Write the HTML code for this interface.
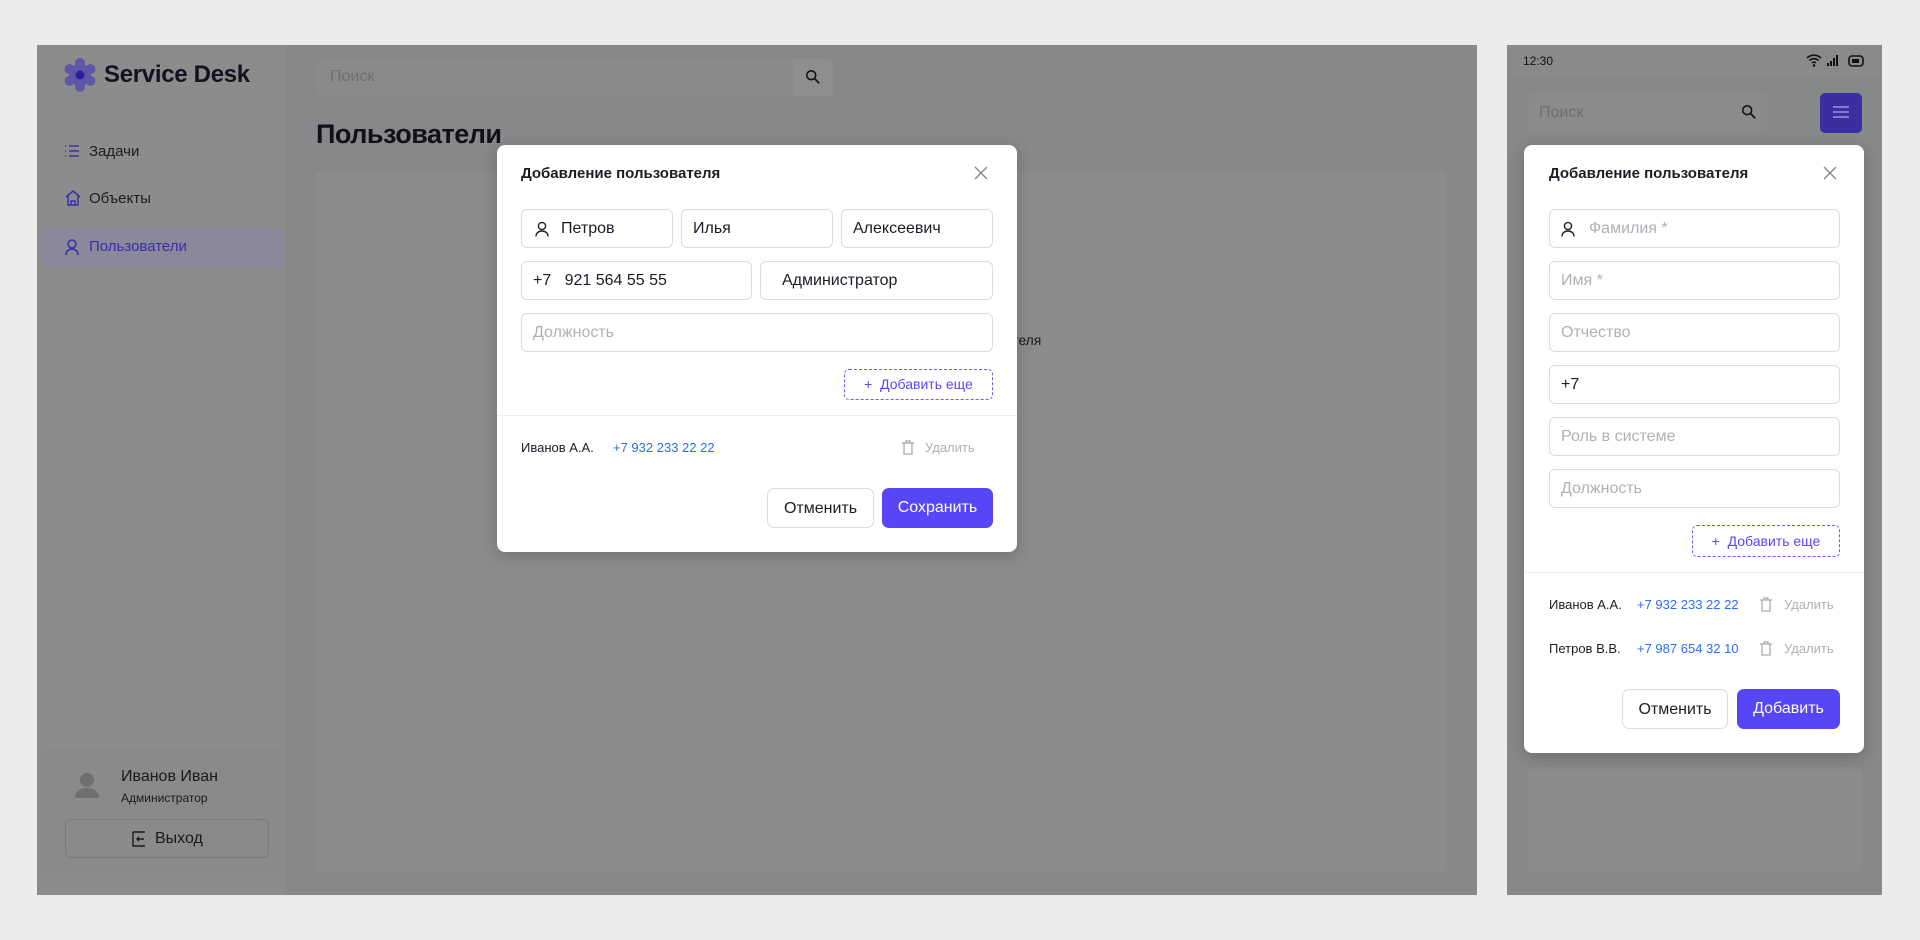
<!DOCTYPE html>
<html><head><meta charset="utf-8"><style>
*{box-sizing:border-box;margin:0;padding:0}
body{width:1920px;height:940px;background:#ececec;font-family:"Liberation Sans",sans-serif;position:relative;overflow:hidden;color:#1c1c28}
.a{position:absolute}
.inp{position:absolute;height:39px;border:1px solid #dcdce0;border-radius:6px;background:#fff;font-size:16px;line-height:38px;padding-left:11px;color:#1c1c28}
.ph{color:#b0b0b8}
.modal{position:absolute;background:#fff;border-radius:8px;box-shadow:0 4px 16px rgba(0,0,0,.2)}
.btn{position:absolute;height:40px;border-radius:7px;font-size:16px;line-height:39px;text-align:center}
.add{position:absolute;border:1px dashed #6a5cf0;border-radius:5px;color:#5a48ef;font-size:14px;text-align:center}
</style></head><body>
<!-- desktop -->
<div class="a" style="left:37px;top:45px;width:1440px;height:850px;background:#87888a"></div>
<div class="a" style="left:37px;top:45px;width:248px;height:850px;background:#8c8c8d"></div>
<svg class="a" style="left:63px;top:58px" width="34" height="34" viewBox="0 0 34 34"><g fill="#5e57a8"><circle cx="17" cy="17" r="11"/><circle cx="17" cy="5" r="5"/><circle cx="17" cy="29" r="5"/><circle cx="6.6" cy="11" r="5"/><circle cx="27.4" cy="11" r="5"/><circle cx="6.6" cy="23" r="5"/><circle cx="27.4" cy="23" r="5"/></g><circle cx="17" cy="17" r="4.5" fill="#2b1f9a"/></svg>
<div class="a" style="left:104px;top:61px;font-size:24px;font-weight:bold;color:#131320;letter-spacing:-0.3px">Service Desk</div>
<div class="a" style="left:316px;top:59px;width:517px;height:37px;background:#8a8a8b;border-radius:4px"></div>
<div class="a" style="left:793px;top:59px;width:40px;height:37px;background:#8e8e8f;border-radius:0 4px 4px 0"></div>
<div class="a" style="left:330px;top:68px;font-size:16px;color:#6f6f72">Поиск</div>
<svg class="a" style="left:805px;top:69px" width="16" height="16" viewBox="0 0 18 18"><circle cx="7" cy="7" r="5" fill="none" stroke="#141414" stroke-width="1.8"/><path d="M11 11l5 5" stroke="#141414" stroke-width="2"/></svg>
<div class="a" style="left:316px;top:119px;font-size:27px;font-weight:bold;color:#111118;letter-spacing:-0.5px">Пользователи</div>
<div class="a" style="left:316px;top:171px;width:1131px;height:701px;background:#8c8c8d;border-radius:6px"></div>
<div class="a" style="left:925px;top:332px;font-size:14px;color:#1a1a1a">Нет пользователя</div>
<svg class="a" style="left:64px;top:143px" width="16" height="16" viewBox="0 0 16 16" stroke="#3a2fa8" stroke-width="1.5"><path d="M1 3h1M5 3h10M1 8h1M5 8h10M1 13h1M5 13h10"/></svg>
<div class="a" style="left:89px;top:143px;font-size:15px;color:#1c1c22">Задачи</div>
<svg class="a" style="left:64px;top:189px" width="18" height="18" viewBox="0 0 18 18" fill="none" stroke="#3a2fa8" stroke-width="1.5"><path d="M2 8L9 2l7 6M4 7v9h10V7M7 16v-4h4v4"/></svg>
<div class="a" style="left:89px;top:190px;font-size:15px;color:#1c1c22">Объекты</div>
<div class="a" style="left:41px;top:228px;width:242px;height:39px;background:#8a889a;border-radius:8px"></div>
<svg class="a" style="left:64px;top:238px" width="16" height="18" viewBox="0 0 16 18" fill="none" stroke="#3a2fa8" stroke-width="1.6"><circle cx="8" cy="6" r="4"/><path d="M2 17c0-4 3-6 6-6s6 2 6 6"/></svg>
<div class="a" style="left:89px;top:238px;font-size:15px;color:#3a2fa8">Пользователи</div>
<div class="a" style="left:41px;top:748px;width:242px;height:124px;background:#8a8a8b;border-radius:6px"></div>
<svg class="a" style="left:74px;top:771px" width="26" height="28" viewBox="0 0 26 28" fill="#6f6f71"><circle cx="13" cy="9" r="7"/><path d="M1 27c0-7 5-10 12-10s12 3 12 10z"/></svg>
<div class="a" style="left:121px;top:768px;font-size:16px;color:#1a1a1e">Иванов Иван</div>
<div class="a" style="left:121px;top:791px;font-size:12px;color:#1a1a1e">Администратор</div>
<div class="a" style="left:65px;top:819px;width:204px;height:39px;border:1px solid #7a7a7c;border-radius:6px"></div>
<svg class="a" style="left:131px;top:831px" width="16" height="16" viewBox="0 0 16 16" fill="none" stroke="#1a1a1e" stroke-width="1.4"><path d="M2 1v14h12M2 1h12M6 8h7M8 6l-2 2 2 2"/></svg>
<div class="a" style="left:155px;top:830px;font-size:16px;color:#1a1a1e">Выход</div>

<div class="modal" style="left:497px;top:145px;width:520px;height:407px">
 <div class="a" style="left:24px;top:20px;font-size:15px;font-weight:bold">Добавление пользователя</div>
 <svg class="a" style="left:477px;top:21px" width="14" height="14" viewBox="0 0 14 14" stroke="#888" stroke-width="1.4"><path d="M1 1l12 12M13 1L1 13"/></svg>
 <div class="inp" style="left:24px;top:64px;width:152px;padding-left:39px">Петров</div>
 <svg class="a" style="left:38px;top:76px" width="14" height="16" viewBox="0 0 14 16" fill="none" stroke="#222" stroke-width="1.4"><circle cx="7" cy="5" r="3.6"/><path d="M1 15.5c0-3.5 2.7-5.5 6-5.5s6 2 6 5.5"/></svg>
 <div class="inp" style="left:184px;top:64px;width:152px">Илья</div>
 <div class="inp" style="left:344px;top:64px;width:152px">Алексеевич</div>
 <div class="inp" style="left:24px;top:116px;width:231px">+7&nbsp;&nbsp;&nbsp;921 564 55 55</div>
 <div class="inp" style="left:263px;top:116px;width:233px;padding-left:21px">Администратор</div>
 <div class="inp ph" style="left:24px;top:168px;width:472px">Должность</div>
 <div class="add" style="left:347px;top:224px;width:149px;height:31px;line-height:29px">+&nbsp; Добавить еще</div>
 <div class="a" style="left:0;top:270px;width:520px;height:1px;background:#eee"></div>
 <div class="a" style="left:24px;top:295px;font-size:13px">Иванов А.А.</div>
 <div class="a" style="left:116px;top:295px;font-size:13px;color:#2c6cf0">+7 932 233 22 22</div>
 <svg class="a" style="left:405px;top:295px" width="12" height="15" viewBox="0 0 12 15" fill="none" stroke="#aaa" stroke-width="1.3"><path d="M0 3h12M4 3V1h4v2M2 3v11h8V3"/></svg>
 <div class="a" style="left:428px;top:295px;font-size:13px;color:#b0b0b5">Удалить</div>
 <div class="btn" style="left:270px;top:343px;width:107px;border:1px solid #dcdce0;color:#1c1c28">Отменить</div>
 <div class="btn" style="left:385px;top:343px;width:111px;background:#5746f5;color:#fff">Сохранить</div>
</div>

<!-- mobile -->
<div class="a" style="left:1507px;top:45px;width:375px;height:850px;background:#87888a"></div>
<div class="a" style="left:1507px;top:45px;width:375px;height:32px;background:#8a8a8b"></div>
<div class="a" style="left:1523px;top:54px;font-size:12px;color:#111">12:30</div>
<svg class="a" style="left:1806px;top:54px" width="60" height="14" viewBox="0 0 60 14"><path d="M1 4a10 10 0 0 1 14 0M3.5 6.5a6.5 6.5 0 0 1 9 0M6 9a3 3 0 0 1 4 0" stroke="#111" stroke-width="1.6" fill="none"/><circle cx="8" cy="11.5" r="1.3" fill="#111"/><path d="M22 12v-3M25 12V7M28 12V4M31 12V1" stroke="#111" stroke-width="2"/><rect x="43" y="2" width="14" height="10" rx="3" fill="none" stroke="#111" stroke-width="1.6"/><rect x="46" y="5" width="7" height="4" fill="#111"/></svg>
<div class="a" style="left:1528px;top:93px;width:239px;height:39px;background:#8b8b8c;border-radius:4px"></div>
<div class="a" style="left:1539px;top:104px;font-size:16px;color:#6f6f72">Поиск</div>
<svg class="a" style="left:1741px;top:104px" width="16" height="16" viewBox="0 0 18 18"><circle cx="7" cy="7" r="5" fill="none" stroke="#141414" stroke-width="1.8"/><path d="M11 11l5 5" stroke="#141414" stroke-width="2"/></svg>
<div class="a" style="left:1820px;top:93px;width:42px;height:40px;background:#3a2ea0;border-radius:5px"></div>
<svg class="a" style="left:1833px;top:105px" width="16" height="14" viewBox="0 0 16 14" stroke="#9a92d8" stroke-width="1.5"><path d="M0 2h16M0 7h16M0 12h16"/></svg>
<div class="a" style="left:1528px;top:767px;width:334px;height:105px;background:#8c8c8d;border-radius:6px"></div>
<div class="modal" style="left:1524px;top:145px;width:340px;height:608px">
 <div class="a" style="left:25px;top:20px;font-size:15px;font-weight:bold">Добавление пользователя</div>
 <svg class="a" style="left:299px;top:21px" width="14" height="14" viewBox="0 0 14 14" stroke="#888" stroke-width="1.4"><path d="M1 1l12 12M13 1L1 13"/></svg>
 <div class="inp ph" style="left:25px;top:64px;width:291px;padding-left:39px">Фамилия *</div>
 <svg class="a" style="left:37px;top:76px" width="14" height="16" viewBox="0 0 14 16" fill="none" stroke="#222" stroke-width="1.4"><circle cx="7" cy="5" r="3.6"/><path d="M1 15.5c0-3.5 2.7-5.5 6-5.5s6 2 6 5.5"/></svg>
 <div class="inp ph" style="left:25px;top:116px;width:291px">Имя *</div>
 <div class="inp ph" style="left:25px;top:168px;width:291px">Отчество</div>
 <div class="inp" style="left:25px;top:220px;width:291px">+7</div>
 <div class="inp ph" style="left:25px;top:272px;width:291px">Роль в системе</div>
 <div class="inp ph" style="left:25px;top:324px;width:291px">Должность</div>
 <div class="add" style="left:168px;top:380px;width:148px;height:32px;line-height:30px">+&nbsp; Добавить еще</div>
 <div class="a" style="left:0;top:427px;width:340px;height:1px;background:#eee"></div>
 <div class="a" style="left:25px;top:452px;font-size:13px">Иванов А.А.</div>
 <div class="a" style="left:113px;top:452px;font-size:13px;color:#2c6cf0">+7 932 233 22 22</div>
 <svg class="a" style="left:236px;top:452px" width="12" height="15" viewBox="0 0 12 15" fill="none" stroke="#aaa" stroke-width="1.3"><path d="M0 3h12M4 3V1h4v2M2 3v11h8V3"/></svg>
 <div class="a" style="left:260px;top:452px;font-size:13px;color:#b0b0b5">Удалить</div>
 <div class="a" style="left:25px;top:496px;font-size:13px">Петров В.В.</div>
 <div class="a" style="left:113px;top:496px;font-size:13px;color:#2c6cf0">+7 987 654 32 10</div>
 <svg class="a" style="left:236px;top:496px" width="12" height="15" viewBox="0 0 12 15" fill="none" stroke="#aaa" stroke-width="1.3"><path d="M0 3h12M4 3V1h4v2M2 3v11h8V3"/></svg>
 <div class="a" style="left:260px;top:496px;font-size:13px;color:#b0b0b5">Удалить</div>
 <div class="btn" style="left:98px;top:544px;width:106px;border:1px solid #dcdce0">Отменить</div>
 <div class="btn" style="left:213px;top:544px;width:103px;background:#5746f5;color:#fff">Добавить</div>
</div>
</body></html>
